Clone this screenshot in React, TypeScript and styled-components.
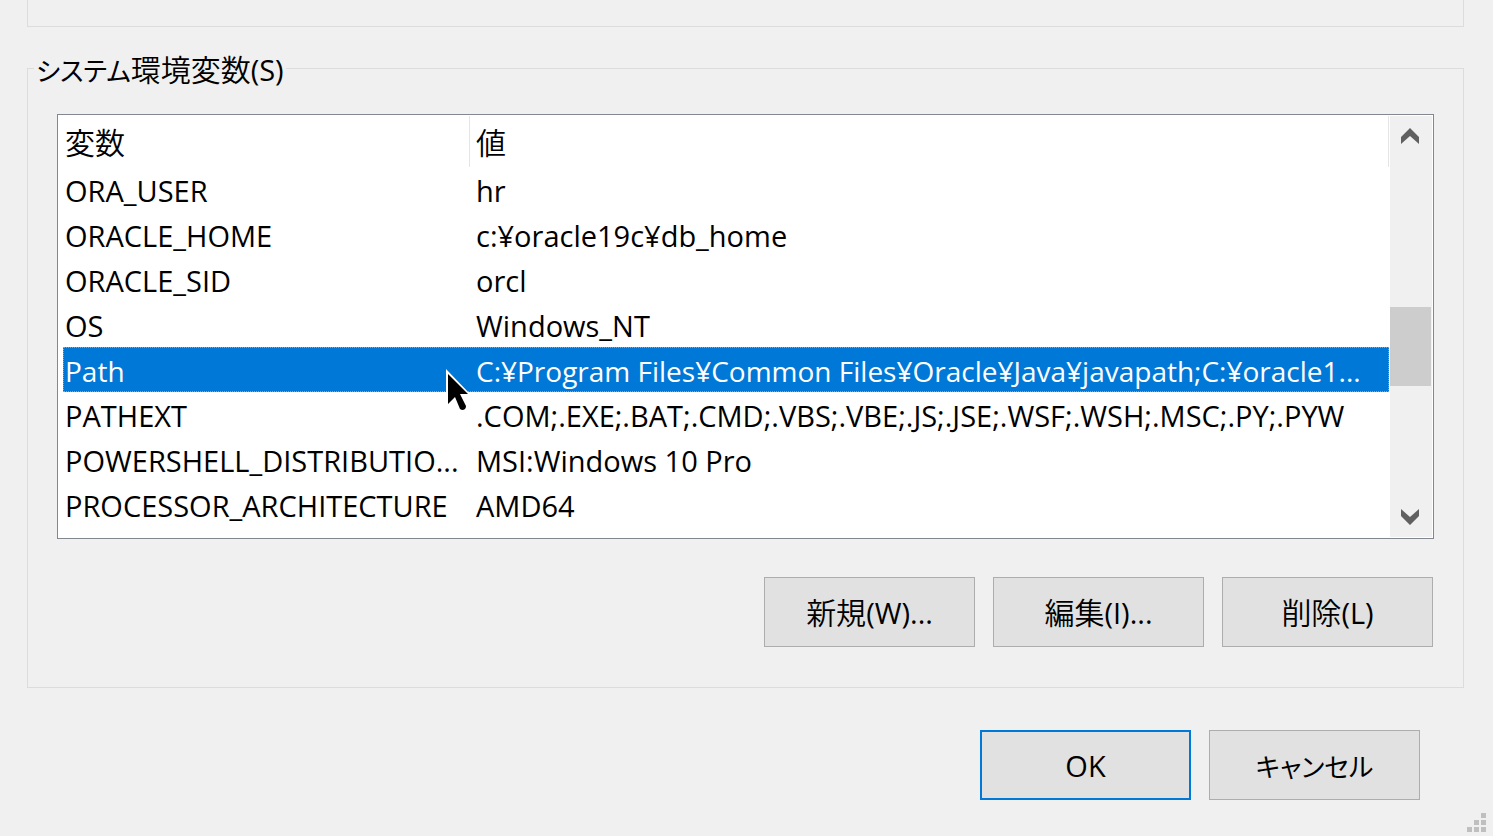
import React from "react";
import styled, { createGlobalStyle } from "styled-components";

const GlobalStyle = createGlobalStyle`
  * { box-sizing: border-box; }
  body {
    margin: 0;
    background: #f0f0f0;
    color: #000;
    font-family: "Open Sans", "Noto Sans CJK JP", sans-serif;
    font-size: 29px;
    line-height: 40px;
    font-feature-settings: "palt";
  }
`;

const Kanji = styled.span`
  font-size: 30px;
  font-weight: 350;
`;

const Kana = styled.span`
  font-size: 26px;
`;

const Dialog = styled.main`
  display: flex;
  flex-direction: column;
  min-height: 100vh;
  padding: 0 29px 4px 27px;
`;

const UpperGroup = styled.div`
  height: 27px;
  border: 1px solid #dcdcdc;
  border-top: 0;
`;

const Group = styled.fieldset`
  min-width: 0;
  margin: 21px 0 0;
  padding: 26px 29px 40px 29px;
  border: 1px solid #dcdcdc;
`;

const GroupTitle = styled.legend`
  height: 40px;
  margin-left: -23px;
  padding: 2px 2px 0;
`;

const ListBox = styled.div`
  display: flex;
  height: 425px;
  padding: 1px 1px 1px 5px;
  border: 1px solid #828790;
  background: #fff;
`;

const ListArea = styled.div`
  flex: 1;
  min-width: 0;
`;

const VariableTable = styled.table`
  width: 100%;
  table-layout: fixed;
  border-collapse: separate;
  border-spacing: 0;
  text-align: left;
  white-space: nowrap;
`;

const NameColumn = styled.col`
  width: 407px;
`;

const HeaderCell = styled.th`
  height: 51px;
  padding: 2px 0 0 6px;
  border-right: 1px solid #e5e5e5;
  font-weight: 400;

  &:first-child { padding-left: 2px; }
`;

const Row = styled.tr<{ $selected?: boolean }>`
  background: ${(p) => (p.$selected ? "#0078d7" : "#fff")};
  color: ${(p) => (p.$selected ? "#fff" : "#000")};
  font-size: ${(p) => (p.$selected ? 28 : 29)}px;
  outline: ${(p) => (p.$selected ? "1px dotted #ff8728" : "none")};
  outline-offset: -1px;
`;

const Cell = styled.td`
  position: relative;
  height: 45px;
  padding: 4px 0 1px 6px;

  &:first-child { padding-left: 2px; z-index: 1; }
`;

const Pointer = styled.svg`
  position: absolute;
  top: 22px;
  left: 383px;
`;

const ScrollBar = styled.div`
  display: flex;
  flex-direction: column;
  width: 42px;
  margin-left: 1px;
  background: #f0f0f0;
`;

const ScrollButton = styled.button`
  display: flex;
  align-items: center;
  justify-content: center;
  width: 40px;
  height: 40px;
  padding: 0;
  border: 0;
  background: transparent;
`;

const Track = styled.div`
  flex: 1;
  padding: 151px 1px 0 0;
`;

const Thumb = styled.div`
  height: 79px;
  background: #cdcdcd;
`;

const ButtonRow = styled.div<{ $footer?: boolean }>`
  display: flex;
  justify-content: flex-end;
  gap: 18px;
  margin-top: ${(p) => (p.$footer ? 42 : 38)}px;
  padding-right: ${(p) => (p.$footer ? 44 : 1)}px;
`;

const PushButton = styled.button<{ $primary?: boolean }>`
  width: 211px;
  height: 70px;
  padding: 2px 0 0;
  border: ${(p) => (p.$primary ? "2px solid #0078d7" : "1px solid #adadad")};
  background: #e1e1e1;
  color: inherit;
  font: inherit;
  font-feature-settings: inherit;
`;

const SizeGrip = styled.svg`
  align-self: flex-end;
  margin: 13px -22px 0 0;
`;

const variables = [
  { name: "ORA_USER", value: "hr" },
  { name: "ORACLE_HOME", value: "c:¥oracle19c¥db_home" },
  { name: "ORACLE_SID", value: "orcl" },
  { name: "OS", value: "Windows_NT" },
  { name: "Path", value: "C:¥Program Files¥Common Files¥Oracle¥Java¥javapath;C:¥oracle1...", selected: true },
  { name: "PATHEXT", value: ".COM;.EXE;.BAT;.CMD;.VBS;.VBE;.JS;.JSE;.WSF;.WSH;.MSC;.PY;.PYW" },
  { name: "POWERSHELL_DISTRIBUTIO...", value: "MSI:Windows 10 Pro" },
  { name: "PROCESSOR_ARCHITECTURE", value: "AMD64" },
];

const gripDots = [[14, 0], [7, 7], [14, 7], [0, 14], [7, 14], [14, 14]];

function MousePointer() {
  return (
    <Pointer width="28" height="44" viewBox="0 0 28 44" aria-hidden="true">
      <path d="M0 0L25 26H16L22 39L16 42L10 29L0 38Z" fill="#fff" />
      <path d="M2 5L22 25H14L20 37Q20 41 16 41L14 40L9 28L2 35Z" fill="#000" />
    </Pointer>
  );
}

export default function App() {
  return (
    <>
      <GlobalStyle />
      <Dialog>
        <UpperGroup />
        <Group>
          <GroupTitle>
            <Kana>システム</Kana>
            <Kanji>環境変数</Kanji>(S)
          </GroupTitle>
          <ListBox>
            <ListArea>
              <VariableTable>
                <colgroup>
                  <NameColumn />
                  <col />
                </colgroup>
                <thead>
                  <tr>
                    <HeaderCell scope="col"><Kanji>変数</Kanji></HeaderCell>
                    <HeaderCell scope="col"><Kanji>値</Kanji></HeaderCell>
                  </tr>
                </thead>
                <tbody>
                  {variables.map((v) => (
                    <Row key={v.name} $selected={v.selected} aria-selected={v.selected}>
                      <Cell>
                        {v.name}
                        {v.selected && <MousePointer />}
                      </Cell>
                      <Cell>{v.value}</Cell>
                    </Row>
                  ))}
                </tbody>
              </VariableTable>
            </ListArea>
            <ScrollBar>
              <ScrollButton type="button" aria-label="上へスクロール">
                <svg width="18" height="16" viewBox="0 0 18 16" fill="#606060">
                  <path d="M9 0L18 9V16L9 8L0 16V9Z" />
                </svg>
              </ScrollButton>
              <Track>
                <Thumb />
              </Track>
              <ScrollButton type="button" aria-label="下へスクロール">
                <svg width="18" height="16" viewBox="0 0 18 16" fill="#606060">
                  <path d="M9 16L18 7V0L9 8L0 0V7Z" />
                </svg>
              </ScrollButton>
            </ScrollBar>
          </ListBox>
          <ButtonRow>
            <PushButton type="button"><Kanji>新規</Kanji>(W)...</PushButton>
            <PushButton type="button"><Kanji>編集</Kanji>(I)...</PushButton>
            <PushButton type="button"><Kanji>削除</Kanji>(L)</PushButton>
          </ButtonRow>
        </Group>
        <ButtonRow $footer>
          <PushButton type="button" $primary>OK</PushButton>
          <PushButton type="button"><Kana>キャンセル</Kana></PushButton>
        </ButtonRow>
        <SizeGrip width="19" height="19" viewBox="0 0 19 19" fill="#bfbfbf" aria-hidden="true">
          {gripDots.map(([x, y]) => (
            <rect key={`${x}-${y}`} x={x} y={y} width="5" height="5" />
          ))}
        </SizeGrip>
      </Dialog>
    </>
  );
}
